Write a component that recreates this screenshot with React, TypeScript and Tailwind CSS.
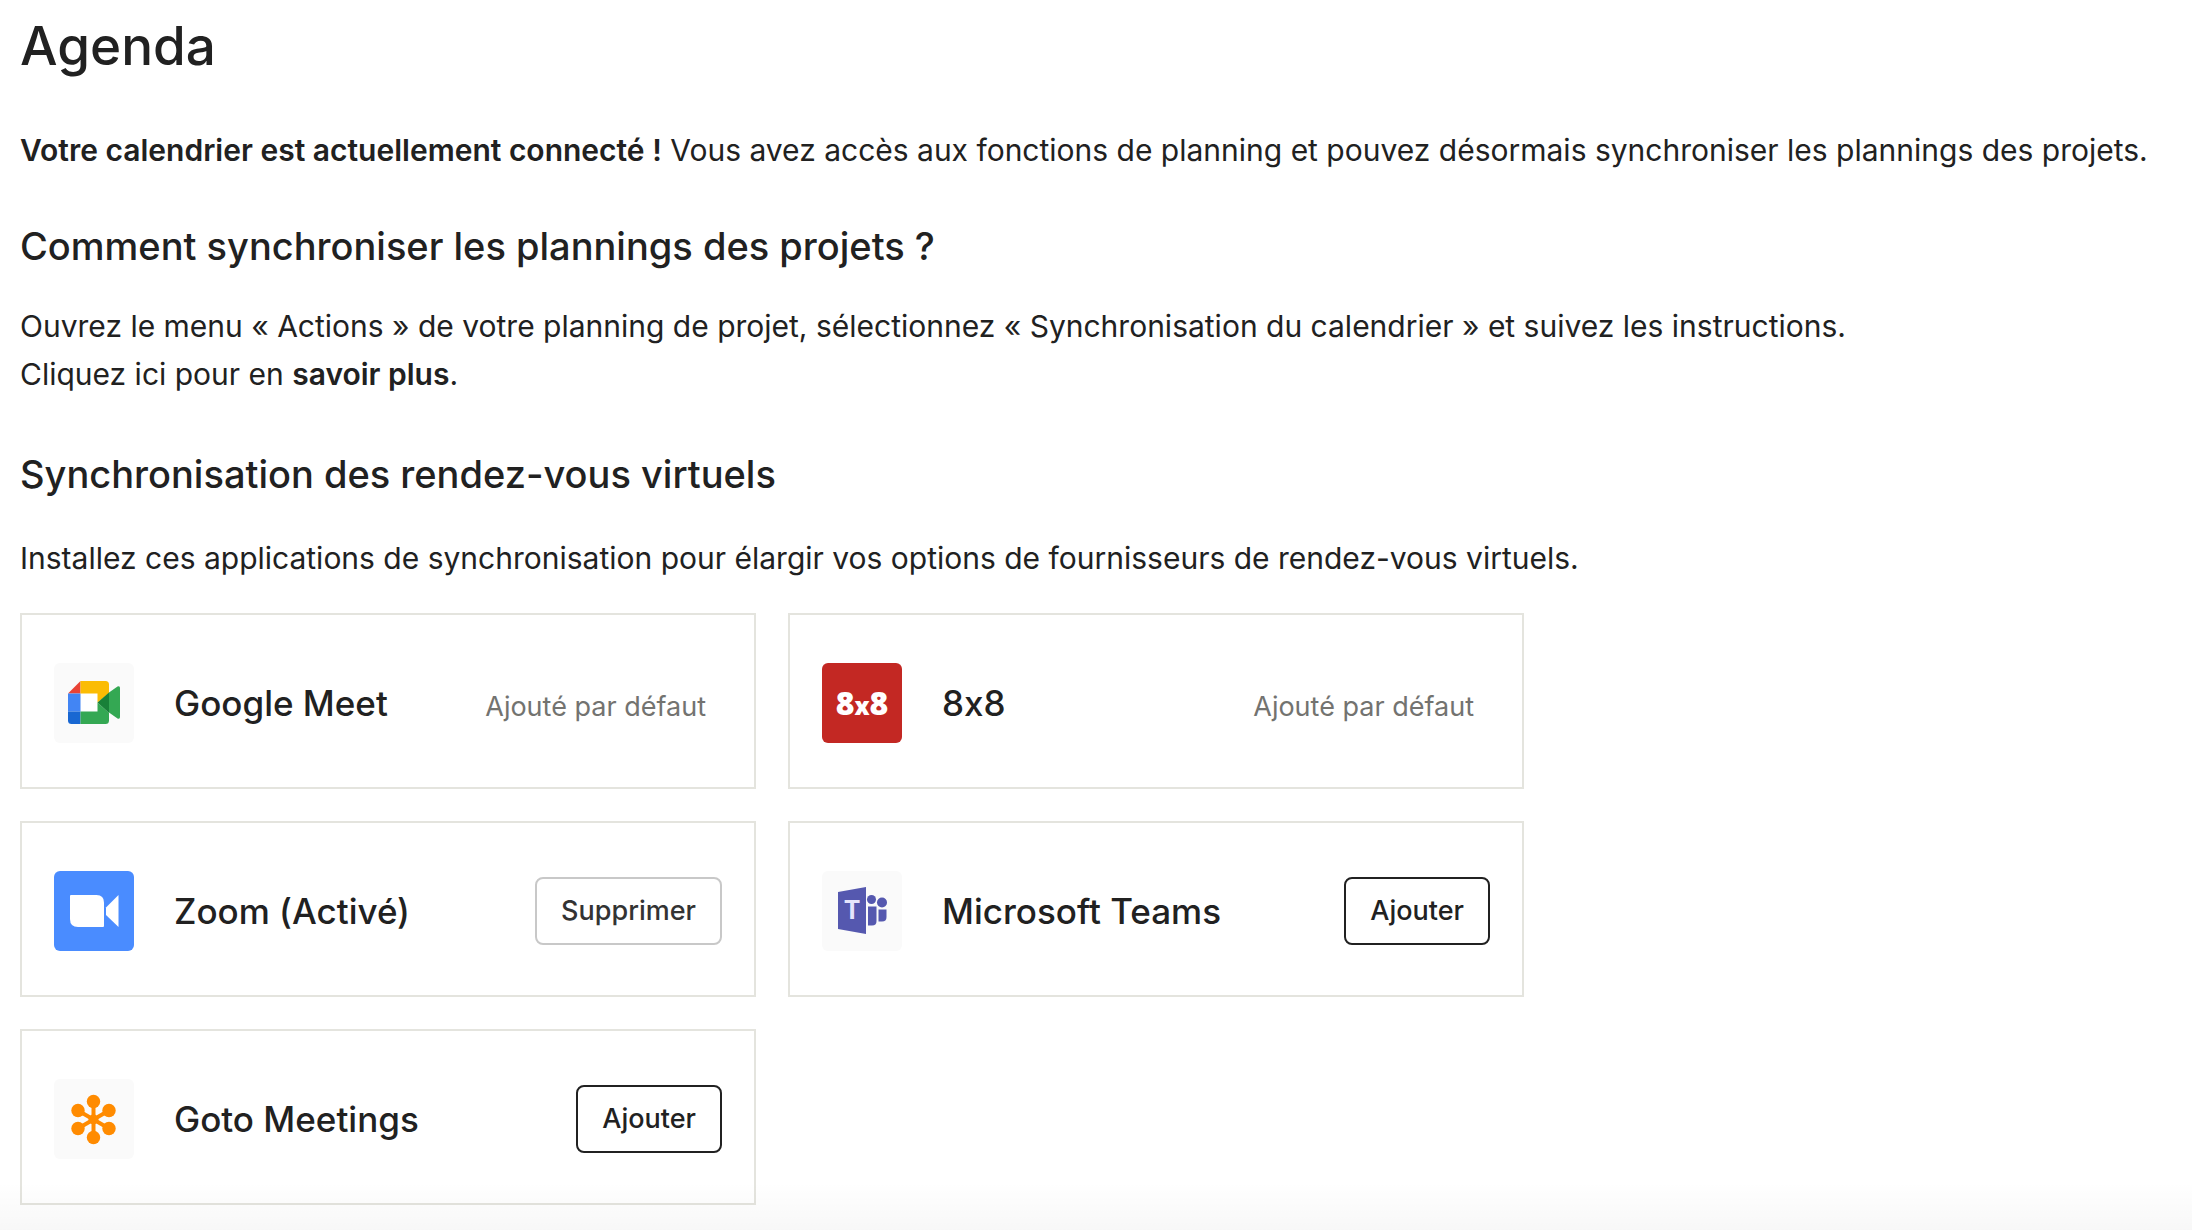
import type { ReactNode } from 'react';

type Status = 'default' | 'active' | 'available';

interface Provider {
  id: string;
  name: string;
  status: Status;
  logo: ReactNode;
}

function GoogleMeetLogo() {
  return (
    <svg viewBox="0 0 80 80" className="h-full w-full" aria-hidden="true">
      <rect x="26" y="30" width="17.5" height="19" fill="#fff" />
      <path d="M14 30.5 L26.5 18 V30.5 Z" fill="#e94235" />
      <path d="M14 30.5 H26.5 V48.5 H14 Z" fill="#4285f4" />
      <path d="M14 48.5 H26.5 V61 H17.5 Q14 61 14 57.5 Z" fill="#1967d2" />
      <path d="M26.5 48.5 H43.5 V39.5 L55 50 V57.5 Q55 61 51.5 61 H26.5 Z" fill="#34a853" />
      <path d="M26.5 18 H51.5 Q55 18 55 21.5 V30 L43.5 39.5 V30.5 H26.5 Z" fill="#fbbc04" />
      <path d="M55 29.5 L63.5 23.5 Q66 22.5 66 25 V54 Q66 56.5 63.5 55.5 L55 49.5 Z" fill="#34a853" />
      <path d="M43.5 39.5 L55 29.5 V50 Z" fill="#188038" />
    </svg>
  );
}

function EightByEightLogo() {
  return (
    <span className="font-['Open_Sans',sans-serif] text-[32px] leading-none font-extrabold text-white">
      8<span className="text-[24px]">x</span>8
    </span>
  );
}

function ZoomLogo() {
  return (
    <svg viewBox="0 0 80 80" className="h-full w-full" aria-hidden="true">
      <path d="M17 24 H42.5 Q50 24 50 31.5 V55 Q50 56 49 56 H24 Q16 56 16 48 V25 Q16 24 17 24 Z" fill="#fff" />
      <path d="M52 36.5 L64.5 24 V56 L52 44 Z" fill="#fff" />
    </svg>
  );
}

function TeamsLogo() {
  return (
    <svg viewBox="0 0 80 80" className="h-full w-full" aria-hidden="true">
      <g fill="#5558af">
        <path d="M16 21 L44 16 V63 L16 58 Z" />
        <circle cx="49.5" cy="28.5" r="4.5" />
        <path d="M46 35.5 H54.5 V50 Q54.5 54.5 50 54.5 H46 Z" />
        <circle cx="60" cy="31.5" r="5" />
        <path d="M56.5 38.5 H64.5 V46 Q64.5 50.5 60 50.5 H56.5 Z" />
      </g>
      <text x="30" y="48" textAnchor="middle" fontSize="25" fontWeight="700" fontFamily="Inter, sans-serif" fill="#e4e4fb">
        T
      </text>
    </svg>
  );
}

function GotoLogo() {
  return (
    <svg viewBox="0 0 80 80" className="h-full w-full" aria-hidden="true">
      <g fill="#ff8b00" stroke="#ff8b00">
        <path d="M39.5 22 V59 M24 31.5 L55 49.5 M55 31.5 L24 49.5" strokeWidth="4" />
        <g stroke="none">
          <circle cx="39.5" cy="40.5" r="5" />
          <circle cx="39.5" cy="22.5" r="6.7" />
          <circle cx="39.5" cy="58.5" r="6.7" />
          <circle cx="24" cy="31.5" r="6.7" />
          <circle cx="24" cy="49.5" r="6.7" />
          <circle cx="55" cy="31.5" r="6.7" />
          <circle cx="55" cy="49.5" r="6.7" />
        </g>
      </g>
    </svg>
  );
}

const providers: Provider[] = [
  { id: 'meet', name: 'Google Meet', status: 'default', logo: <GoogleMeetLogo /> },
  { id: '8x8', name: '8x8', status: 'default', logo: <EightByEightLogo /> },
  { id: 'zoom', name: 'Zoom (Activé)', status: 'active', logo: <ZoomLogo /> },
  { id: 'teams', name: 'Microsoft Teams', status: 'available', logo: <TeamsLogo /> },
  { id: 'goto', name: 'Goto Meetings', status: 'available', logo: <GotoLogo /> },
];

function logoBackground(id: string) {
  if (id === '8x8') return 'bg-[#c32823]';
  if (id === 'zoom') return 'bg-[#4a8cff]';
  return 'bg-[#fafafa]';
}

function ProviderCard({ provider }: { provider: Provider }) {
  return (
    <li className="flex h-44 items-center border-2 border-[#e4e4de] px-8 pt-1">
      <div
        className={`flex h-20 w-20 shrink-0 items-center justify-center overflow-hidden rounded-md ${logoBackground(provider.id)}`}
      >
        {provider.logo}
      </div>
      {/* Inter turns "8x8" into "8×8" unless contextual alternates are off */}
      <h3 className="ml-10 flex-1 text-[35px] leading-12 font-medium [font-variant-ligatures:no-contextual]">
        {provider.name}
      </h3>
      {provider.status === 'default' && (
        <span className="mr-4 pt-2 text-[27px] leading-10 text-[#737370]">Ajouté par défaut</span>
      )}
      {provider.status === 'active' && (
        <button
          type="button"
          className="h-17 rounded-lg border-2 border-[#c8c8c8] px-6 text-[27px] font-medium text-[#333333]"
        >
          Supprimer
        </button>
      )}
      {provider.status === 'available' && (
        <button type="button" className="h-17 rounded-lg border-2 border-[#212121] px-6 text-[27px] font-medium">
          Ajouter
        </button>
      )}
    </li>
  );
}

export default function App() {
  return (
    <main className="relative min-h-screen bg-white px-5 pt-3.5 pb-6 font-['Inter',sans-serif] text-[30px] leading-12 text-[#212121]">
      <h1 className="text-[53px] leading-16 font-medium">Agenda</h1>
      <p className="mt-12">
        <strong className="font-semibold">Votre calendrier est actuellement connecté !</strong> Vous avez accès aux
        fonctions de planning et pouvez désormais synchroniser les plannings des projets.
      </p>

      <section className="mt-11">
        <h2 className="text-[38px] leading-14 font-medium">Comment synchroniser les plannings des projets ?</h2>
        <p className="mt-7">
          Ouvrez le menu « Actions » de votre planning de projet, sélectionnez « Synchronisation du calendrier » et
          suivez les instructions.
          <br />
          Cliquez ici pour en{' '}
          <a href="#savoir-plus" className="font-semibold">
            savoir plus
          </a>
          .
        </p>
      </section>

      <section className="mt-12">
        <h2 className="text-[38px] leading-14 font-medium">Synchronisation des rendez-vous virtuels</h2>
        <p className="mt-8">
          Installez ces applications de synchronisation pour élargir vos options de fournisseurs de rendez-vous
          virtuels.
        </p>
        <ul className="mt-[31px] grid max-w-[1504px] grid-cols-2 gap-8">
          {providers.map((provider) => (
            <ProviderCard key={provider.id} provider={provider} />
          ))}
        </ul>
      </section>

      {/* Fade at the bottom edge of the scroll area */}
      <div className="pointer-events-none absolute inset-x-0 bottom-0 h-12 bg-linear-to-b from-transparent to-black/3" />
    </main>
  );
}
